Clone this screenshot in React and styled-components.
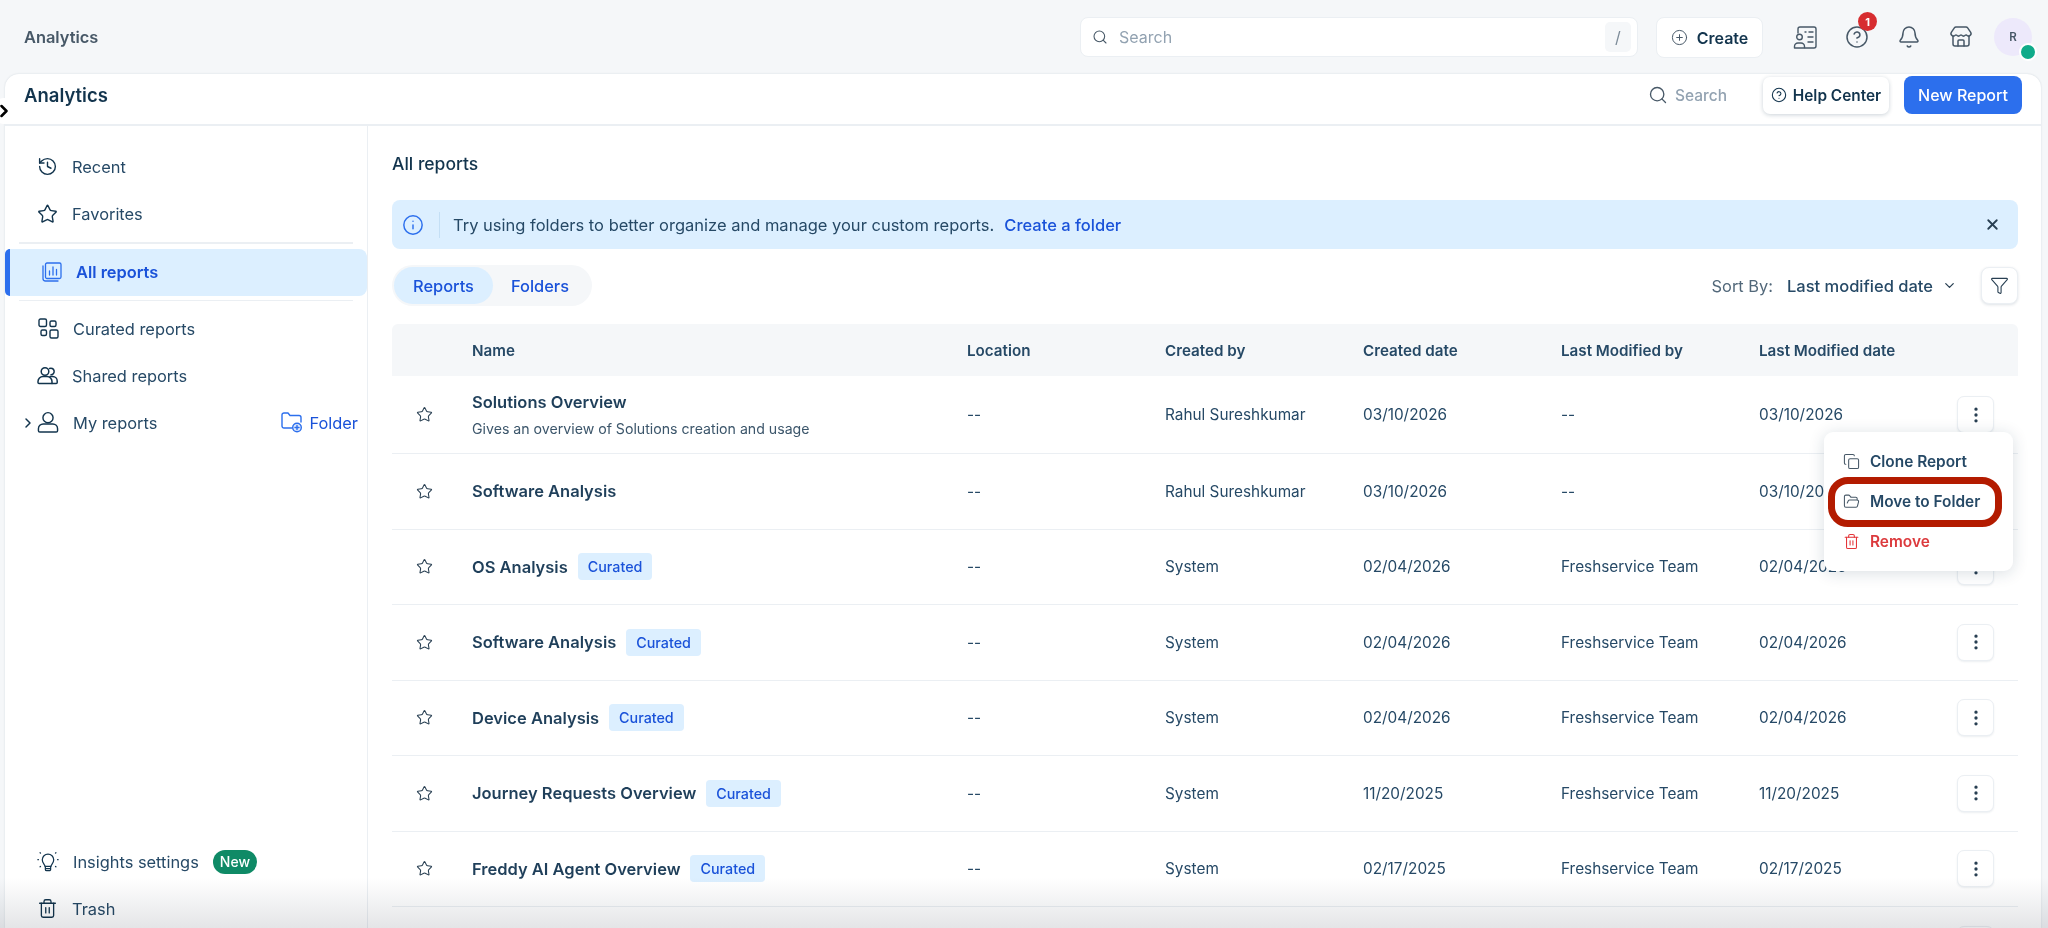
import styled, { createGlobalStyle } from "styled-components";
import {
  Bell,
  ChevronDown,
  ChevronRight,
  CircleHelp,
  CirclePlus,
  Copy,
  EllipsisVertical,
  FolderOpen,
  Funnel,
  History,
  Info,
  Search,
  Star,
  Store,
  Trash2,
  X,
} from "lucide-react";

const reports = [
  { name: "Solutions Overview", desc: "Gives an overview of Solutions creation and usage", createdBy: "Rahul Sureshkumar", created: "03/10/2026", modifiedBy: "--", modified: "03/10/2026" },
  { name: "Software Analysis", createdBy: "Rahul Sureshkumar", created: "03/10/2026", modifiedBy: "--", modified: "03/10/2026" },
  { name: "OS Analysis", curated: true, createdBy: "System", created: "02/04/2026", modifiedBy: "Freshservice Team", modified: "02/04/2026" },
  { name: "Software Analysis", curated: true, createdBy: "System", created: "02/04/2026", modifiedBy: "Freshservice Team", modified: "02/04/2026" },
  { name: "Device Analysis", curated: true, createdBy: "System", created: "02/04/2026", modifiedBy: "Freshservice Team", modified: "02/04/2026" },
  { name: "Journey Requests Overview", curated: true, createdBy: "System", created: "11/20/2025", modifiedBy: "Freshservice Team", modified: "11/20/2025" },
  { name: "Freddy AI Agent Overview", curated: true, createdBy: "System", created: "02/17/2025", modifiedBy: "Freshservice Team", modified: "02/17/2025" },
];

const AllReportsIcon = () => (
  <svg width="20" height="20" viewBox="0 0 20 20" fill="none" stroke="currentColor" strokeWidth="1.3" strokeLinecap="round" strokeLinejoin="round">
    <rect x="3.5" y="1" width="15.5" height="15.5" rx="1.5" />
    <path d="M1 4v12.5C1 18 2 19 3.5 19H16" />
    <path d="M7.5 13V9M11 13V5M14.5 13V7.5" />
  </svg>
);

const CuratedIcon = () => (
  <svg width="21" height="21" viewBox="0 0 21 21" fill="none" stroke="currentColor" strokeWidth="1.4" strokeLinejoin="round">
    <rect x="1" y="1" width="7.5" height="7.5" rx="1.5" />
    <rect x="12" y="3" width="6" height="5.5" rx="1.5" />
    <rect x="3" y="12" width="5.5" height="5.5" rx="1.5" />
    <rect x="12" y="12" width="8" height="8" rx="1.5" />
  </svg>
);

const SharedIcon = () => (
  <svg width="21" height="19" viewBox="0 0 21 19" fill="none" stroke="currentColor" strokeWidth="1.5" strokeLinecap="round" strokeLinejoin="round">
    <circle cx="8" cy="5.5" r="3.8" />
    <path d="M1 16v-.5A5 5 0 0 1 6 10.5h4a5 5 0 0 1 5 5v2H2a1 1 0 0 1-1-1z" />
    <path d="M12.5 2.5a3.3 3.3 0 1 1 1.5 6.3" />
    <path d="M15 17.5h4.2a1 1 0 0 0 1-1V15a4.5 4.5 0 0 0-4.5-4.5H13" />
  </svg>
);

const PersonIcon = () => (
  <svg width="23" height="23" viewBox="0 0 23 23" fill="none" stroke="currentColor" strokeWidth="1.5" strokeLinejoin="round">
    <circle cx="11.5" cy="6.5" r="5.3" />
    <path d="M1.5 20v-2a5 5 0 0 1 5-5h10a5 5 0 0 1 5 5v2a1.5 1.5 0 0 1-1.5 1.5H3A1.5 1.5 0 0 1 1.5 20z" />
  </svg>
);

const BulbIcon = () => (
  <svg width="25" height="25" viewBox="0 0 25 25" fill="none" stroke="currentColor" strokeWidth="1.4" strokeLinecap="round" strokeLinejoin="round">
    <path d="M9 18c0-2-3-3.500-3-7.500a6.500 6.500 0 0 1 13 0c0 4-3 5.500-3 7.500z" />
    <path d="M9.500 18v3.500a1.500 1.500 0 0 0 1.500 1.500h3a1.500 1.500 0 0 0 1.500-1.500V18M9.500 20.500h6" />
    <path d="M1 10.500h.6M23.400 10.500h.6M3.500 2.500l.5.5M21.500 2.500l-.5.5M3.500 18.500l.5-.5M21.500 18.500l-.5-.5" />
  </svg>
);

const NewFolderIcon = () => (
  <svg width="22" height="21" viewBox="0 0 22 21" fill="none" stroke="currentColor" strokeWidth="1.4" strokeLinecap="round" strokeLinejoin="round">
    <path d="M11 16H3a2 2 0 0 1-2-2V3a2 2 0 0 1 2-2h4l2 2.500h9a2 2 0 0 1 2 2V10" />
    <circle cx="16" cy="15.500" r="4.300" fill="currentColor" fillOpacity="0.15" />
    <path d="M16 13.500v4M14 15.500h4" />
  </svg>
);

const ContactsIcon = () => (
  <svg width="25" height="25" viewBox="0 0 25 25" fill="none" stroke="currentColor" strokeWidth="1.4" strokeLinecap="round" strokeLinejoin="round">
    <path d="M5 8V4a2 2 0 0 1 2-2h14a2 2 0 0 1 2 2v17a2 2 0 0 1-2 2H12" />
    <circle cx="6.500" cy="12" r="2.800" />
    <path d="M1.500 23v-1.500a3.500 3.500 0 0 1 3.500-3.500h3a3.500 3.500 0 0 1 3.500 3.500V23z" />
    <path d="M12 7h1M16 7h4M15 12h5M15 17h5" />
  </svg>
);

const GlobalStyle = createGlobalStyle`
  html, body {
    margin: 0;
    height: 100%;
    overflow: hidden;
    background: #f5f7f9;
  }
  body {
    font-family: Inter, "Liberation Sans", sans-serif;
    color: #12344d;
  }
  *, *::after {
    box-sizing: border-box;
  }
`;

const Page = styled.div`
  position: relative;
  height: 928px;
  display: flex;
  flex-direction: column;
  overflow: hidden;
`;

const TopBar = styled.header`
  height: 74px;
  flex-shrink: 0;
  display: flex;
  align-items: flex-start;
  padding: 17px 16px 0 24px;
`;

const TopTitle = styled.div`
  font-size: 16.4px;
  font-weight: 600;
  color: #475867;
  line-height: 40px;
  margin-right: auto;
`;

const GlobalSearch = styled.div`
  width: 558px;
  height: 40px;
  background: #fff;
  border: 1px solid #ebeff3;
  border-radius: 8px;
  display: flex;
  align-items: center;
  gap: 11px;
  padding: 0 6px 0 11px;
  color: #92a2b1;
  font-size: 16px;
  svg {
    color: #475867;
  }
`;

const SlashKey = styled.span`
  margin-left: auto;
  width: 26px;
  height: 30px;
  border-radius: 5px;
  background: #f5f7f9;
  display: flex;
  align-items: center;
  justify-content: center;
  color: #7c8b98;
  font-size: 16px;
`;

const CreateButton = styled.button`
  margin-left: 18px;
  width: 107px;
  height: 41px;
  background: #fff;
  border: 1px solid #ebeff3;
  border-radius: 8px;
  display: flex;
  align-items: center;
  justify-content: center;
  gap: 9px;
  font: 600 16px Inter, sans-serif;
  color: #12344d;
  svg {
    color: #475867;
  }
`;

const TopIcons = styled.div`
  display: flex;
  align-items: center;
  gap: 26px;
  margin-left: 29px;
  height: 38px;
  margin-top: 1px;
  color: #475867;
`;

const IconSlot = styled.span`
  position: relative;
  display: flex;
  width: 26px;
  justify-content: center;
`;

const CountBadge = styled.span`
  position: absolute;
  top: -13px;
  right: -7px;
  width: 19px;
  height: 19px;
  border-radius: 50%;
  background: #d72d30;
  color: #fff;
  font-size: 11px;
  font-weight: 700;
  display: flex;
  align-items: center;
  justify-content: center;
`;

const Avatar = styled.div`
  position: relative;
  width: 38px;
  height: 38px;
  border-radius: 50%;
  background: #ede9fb;
  color: #475867;
  font-size: 11.5px;
  font-weight: 600;
  display: flex;
  align-items: center;
  justify-content: center;
  margin-left: -6px;
`;

const StatusDot = styled.span`
  position: absolute;
  right: -5px;
  bottom: -5px;
  width: 18px;
  height: 18px;
  border-radius: 50%;
  background: #10ab8a;
  border: 2.5px solid #fff;
`;

const Card = styled.div`
  flex: 1;
  min-height: 0;
  margin: 0 7px 0 5px;
  background: #fff;
  border-top-left-radius: 14px;
  border-top-right-radius: 14px;
  box-shadow: 0 0 2px rgba(18, 52, 77, 0.16);
  display: flex;
  flex-direction: column;
`;

const CardHeader = styled.div`
  height: 52px;
  flex-shrink: 0;
  display: flex;
  align-items: center;
  padding: 2px 19px 10px;
  border-bottom: 2px solid #ebeff3;
`;

const CardTitle = styled.h1`
  margin: 0 auto 0 0;
  font-size: 18.5px;
  font-weight: 600;
  color: #12344d;
`;

const HeaderSearch = styled.div`
  display: flex;
  align-items: center;
  gap: 7px;
  color: #92a2b1;
  font-size: 15.5px;
  font-weight: 500;
  margin-right: 36px;
  svg {
    color: #475867;
  }
`;

const HelpButton = styled.button`
  width: 126px;
  height: 37px;
  background: #fff;
  border: none;
  border-radius: 7px;
  box-shadow: 0 1px 4px rgba(18, 52, 77, 0.22);
  display: flex;
  align-items: center;
  justify-content: center;
  gap: 6px;
  font: 600 15.4px Inter, sans-serif;
  color: #12344d;
`;

const PrimaryButton = styled.button`
  margin-left: 15px;
  width: 118px;
  height: 38px;
  border: none;
  border-radius: 8px;
  background: #2c6fed;
  color: #fff;
  font: 500 16px Inter, sans-serif;
`;

const Collapse = styled.div`
  position: absolute;
  left: -8px;
  top: 98px;
  width: 24px;
  height: 26px;
  border-radius: 50%;
  background: #fff;
  display: flex;
  align-items: center;
  padding-left: 2px;
  color: #000;
`;

const CardBody = styled.div`
  flex: 1;
  min-height: 0;
  display: grid;
  grid-template-columns: 363px 1fr;
`;

const Sidebar = styled.aside`
  border-right: 1.5px solid #ebeff3;
  display: flex;
  flex-direction: column;
  justify-content: space-between;
  padding-top: 17px;
`;

const NavGroup = styled.nav`
  display: flex;
  flex-direction: column;
  margin-bottom: ${(p) => p.$bottom || "0"};
`;

const NavItem = styled.div`
  position: relative;
  height: 47px;
  display: flex;
  align-items: center;
  gap: 14px;
  padding-left: 32px;
  font-size: 16.4px;
  color: #264966;
`;

const NavIcon = styled.span`
  width: ${(p) => p.$width || "21px"};
  display: flex;
  justify-content: center;
  flex-shrink: 0;
  color: #12344d;
`;

const ActiveNavItem = styled(NavItem)`
  background: #dcefff;
  border-left: 5px solid #2c6fed;
  border-radius: 5px 8px 8px 5px;
  font-weight: 600;
  color: #1a52d9;
  svg {
    color: #2c6fed;
  }
`;

const NavDivider = styled.div`
  height: 1.5px;
  margin: ${(p) => p.$margin};
  margin-left: 14px;
  margin-right: 14px;
  background: #ebeff3;
`;

const Expand = styled.span`
  position: absolute;
  left: 15px;
  display: flex;
  color: #12344d;
`;

const FolderLink = styled.span`
  margin-left: auto;
  margin-right: 9px;
  display: flex;
  align-items: center;
  gap: 6px;
  color: #1a52d9;
  svg {
    color: #2c6fed;
  }
`;

const NewTag = styled.span`
  background: #0f8a66;
  color: #fff;
  font-size: 14px;
  font-weight: 500;
  border-radius: 12px;
  height: 24px;
  padding: 0 7px;
  display: flex;
  align-items: center;
`;

const Main = styled.main`
  position: relative;
  padding: 0 23px 0 24px;
  overflow: hidden;
`;

const PageTitle = styled.h2`
  margin: 0;
  padding-top: 25px;
  line-height: 26px;
  font-size: 17.5px;
  font-weight: 500;
  color: #12344d;
`;

const InfoBanner = styled.div`
  margin-top: 23px;
  height: 49px;
  background: #dcefff;
  border-radius: 8px;
  display: flex;
  align-items: center;
  padding: 0 17px 0 10px;
  font-size: 16.5px;
  color: #264966;
`;

const BannerIcon = styled.span`
  display: flex;
  color: #2c6fed;
  padding-right: 15px;
  margin-right: 13px;
  border-right: 1px solid #c4dff5;
  height: 26px;
  align-items: center;
`;

const BannerLink = styled.a`
  color: #1a52d9;
  font-weight: 500;
  margin-left: 10px;
`;

const BannerClose = styled.span`
  margin-left: auto;
  display: flex;
  color: #283f52;
`;

const ToolRow = styled.div`
  margin-top: 16px;
  height: 41px;
  display: flex;
  align-items: center;
`;

const Tabs = styled.div`
  height: 41px;
  padding: 2px;
  display: flex;
  background: #f5f7f9;
  border-radius: 21px;
`;

const Tab = styled.span`
  height: 37px;
  padding: ${(p) => (p.$active ? "0 19px" : "0 21px 0 18px")};
  display: flex;
  align-items: center;
  font-size: 16.4px;
  font-weight: 500;
  color: #1a52d9;
  border-radius: 19px;
  background: ${(p) => (p.$active ? "#dcefff" : "transparent")};
`;

const SortLabel = styled.span`
  margin-left: auto;
  font-size: 16.4px;
  color: #52687a;
`;

const SortValue = styled.span`
  margin-left: 14px;
  font-size: 16.5px;
  font-weight: 500;
  color: #264966;
`;

const SortCaret = styled.span`
  display: flex;
  margin-left: 9px;
  color: #283f52;
`;

const FilterButton = styled.button`
  margin-left: 24px;
  width: 37px;
  height: 37px;
  padding: 0;
  background: #fff;
  border: 1px solid #ebeff3;
  border-radius: 8px;
  box-shadow: 0 1px 3px rgba(18, 52, 77, 0.14);
  display: flex;
  align-items: center;
  justify-content: center;
  color: #283f52;
`;

const columns = "80px 495px 198px 198px 198px 198px 1fr";

const TableHead = styled.div`
  margin-top: 18px;
  height: 52px;
  display: grid;
  grid-template-columns: ${columns};
  align-items: center;
  background: #f5f7f9;
  border-radius: 6px 6px 0 0;
  font-size: 15.2px;
  font-weight: 600;
  color: #264966;
`;

const Row = styled.div`
  height: ${(p) => (p.$tall ? "78px" : "75.5px")};
  display: grid;
  grid-template-columns: ${columns};
  align-items: center;
  border-bottom: 1.5px solid #ebeff3;
  font-size: 15.35px;
  color: #264966;
`;

const StarCell = styled.span`
  display: flex;
  padding-left: 24px;
  color: #283f52;
`;

const NameLine = styled.div`
  display: flex;
  align-items: center;
  gap: 10px;
  font-weight: 600;
  font-size: 16.5px;
  color: #1f3f5a;
`;

const Description = styled.div`
  margin-top: 8px;
  font-size: 14.15px;
  color: #3c566b;
`;

const CuratedTag = styled.span`
  height: 27px;
  padding: 0 10px;
  display: flex;
  align-items: center;
  background: #dcefff;
  border-radius: 4px;
  font-size: 14.3px;
  font-weight: 500;
  color: #1a52d9;
`;

const LastCell = styled.div`
  display: flex;
  align-items: center;
  padding-right: 24px;
`;

const KebabButton = styled.button`
  margin-left: auto;
  width: 37px;
  height: 37px;
  padding: 0;
  background: #fff;
  border: 1px solid #ebeff3;
  border-radius: 7px;
  box-shadow: 0 1px 2px rgba(18, 52, 77, 0.08);
  display: flex;
  align-items: center;
  justify-content: center;
  color: #283f52;
`;

const RowMenu = styled.div`
  position: absolute;
  left: 1456px;
  top: 306px;
  width: 189px;
  height: 139px;
  padding: 9px 0;
  background: #fff;
  border-radius: 9px;
  box-shadow: 0 2px 16px rgba(18, 52, 77, 0.16);
  z-index: 2;
`;

const MenuItem = styled.div`
  position: relative;
  height: 40px;
  display: flex;
  align-items: center;
  gap: 10px;
  padding-left: 19px;
  font-size: 15.4px;
  font-weight: 600;
  color: ${(p) => (p.$danger ? "#dc3a3d" : "#264966")};
  svg {
    color: ${(p) => (p.$danger ? "#e43538" : "#475867")};
  }
  ${(p) =>
    p.$marked &&
    `
    &::after {
      content: "";
      position: absolute;
      left: 4px;
      top: -4px;
      width: 174px;
      height: 50px;
      border: 7px solid #b31b00;
      border-radius: 20px;
    }
  `}
`;

const BottomFade = styled.div`
  position: absolute;
  left: 0;
  right: 0;
  bottom: 0;
  height: 50px;
  background: linear-gradient(#ffffff, #e4e5e7);
  mix-blend-mode: multiply;
  pointer-events: none;
  z-index: 3;
`;

const App = () => {
  return (
    <Page>
      <GlobalStyle />
      <TopBar>
        <TopTitle>Analytics</TopTitle>
        <GlobalSearch>
          <Search size={16} strokeWidth={1.6} />
          Search
          <SlashKey>/</SlashKey>
        </GlobalSearch>
        <CreateButton>
          <CirclePlus size={17} strokeWidth={1.4} />
          Create
        </CreateButton>
        <TopIcons>
          <IconSlot>
            <ContactsIcon />
          </IconSlot>
          <IconSlot>
            <CircleHelp size={24} strokeWidth={1.5} />
            <CountBadge>1</CountBadge>
          </IconSlot>
          <IconSlot>
            <Bell size={24} strokeWidth={1.5} />
          </IconSlot>
          <IconSlot>
            <Store size={24} strokeWidth={1.5} />
          </IconSlot>
          <Avatar>
            R
            <StatusDot />
          </Avatar>
        </TopIcons>
      </TopBar>

      <Card>
        <CardHeader>
          <CardTitle>Analytics</CardTitle>
          <HeaderSearch>
            <Search size={20} strokeWidth={1.6} />
            Search
          </HeaderSearch>
          <HelpButton>
            <CircleHelp size={16} strokeWidth={1.6} />
            Help Center
          </HelpButton>
          <PrimaryButton>New Report</PrimaryButton>
        </CardHeader>
        <CardBody>
          <Sidebar>
            <NavGroup>
              <NavItem>
                <NavIcon>
                  <History size={21} strokeWidth={1.6} />
                </NavIcon>
                Recent
              </NavItem>
              <NavItem>
                <NavIcon>
                  <Star size={22} strokeWidth={1.6} />
                </NavIcon>
                Favorites
              </NavItem>
              <NavDivider $margin="5px 0 5px" />
              <ActiveNavItem>
                <NavIcon $width="20px">
                  <AllReportsIcon />
                </NavIcon>
                All reports
              </ActiveNavItem>
              <NavDivider $margin="4px 0 4px" />
              <NavItem>
                <NavIcon $width="22px">
                  <CuratedIcon />
                </NavIcon>
                Curated reports
              </NavItem>
              <NavItem>
                <NavIcon>
                  <SharedIcon />
                </NavIcon>
                Shared reports
              </NavItem>
              <NavItem>
                <Expand>
                  <ChevronRight size={16} strokeWidth={2.2} />
                </Expand>
                <NavIcon $width="22px">
                  <PersonIcon />
                </NavIcon>
                My reports
                <FolderLink>
                  <NewFolderIcon />
                  Folder
                </FolderLink>
              </NavItem>
            </NavGroup>
            <NavGroup $bottom="-4px">
              <NavItem>
                <NavIcon $width="22px">
                  <BulbIcon />
                </NavIcon>
                Insights settings
                <NewTag>New</NewTag>
              </NavItem>
              <NavItem>
                <NavIcon>
                  <Trash2 size={23} strokeWidth={1.5} />
                </NavIcon>
                Trash
              </NavItem>
            </NavGroup>
          </Sidebar>

          <Main>
            <PageTitle>All reports</PageTitle>
            <InfoBanner>
              <BannerIcon>
                <Info size={22} strokeWidth={1.6} />
              </BannerIcon>
              Try using folders to better organize and manage your custom reports.
              <BannerLink>Create a folder</BannerLink>
              <BannerClose>
                <X size={17} strokeWidth={2.6} />
              </BannerClose>
            </InfoBanner>
            <ToolRow>
              <Tabs>
                <Tab $active>Reports</Tab>
                <Tab>Folders</Tab>
              </Tabs>
              <SortLabel>Sort By:</SortLabel>
              <SortValue>Last modified date</SortValue>
              <SortCaret>
                <ChevronDown size={15} strokeWidth={2} />
              </SortCaret>
              <FilterButton>
                <Funnel size={19} strokeWidth={1.4} />
              </FilterButton>
            </ToolRow>
            <TableHead>
              <span />
              <span>Name</span>
              <span>Location</span>
              <span>Created by</span>
              <span>Created date</span>
              <span>Last Modified by</span>
              <span>Last Modified date</span>
            </TableHead>
            {reports.map((report, i) => (
              <Row key={i} $tall={i === 0}>
                <StarCell>
                  <Star size={17} strokeWidth={1.5} />
                </StarCell>
                <div>
                  <NameLine>
                    {report.name}
                    {report.curated && <CuratedTag>Curated</CuratedTag>}
                  </NameLine>
                  {report.desc && <Description>{report.desc}</Description>}
                </div>
                <span>--</span>
                <span>{report.createdBy}</span>
                <span>{report.created}</span>
                <span>{report.modifiedBy}</span>
                <LastCell>
                  {report.modified}
                  <KebabButton>
                    <EllipsisVertical size={20} strokeWidth={2} />
                  </KebabButton>
                </LastCell>
              </Row>
            ))}
            <Row>
              <span />
              <span />
              <span />
              <span />
              <span />
              <span />
              <LastCell>
                <KebabButton>
                  <EllipsisVertical size={20} strokeWidth={2} />
                </KebabButton>
              </LastCell>
            </Row>
            <RowMenu>
              <MenuItem>
                <Copy size={17} strokeWidth={1.5} />
                Clone Report
              </MenuItem>
              <MenuItem $marked>
                <FolderOpen size={17} strokeWidth={1.5} />
                Move to Folder
              </MenuItem>
              <MenuItem $danger>
                <Trash2 size={17} strokeWidth={1.5} />
                Remove
              </MenuItem>
            </RowMenu>
          </Main>
        </CardBody>
      </Card>
      <Collapse>
        <ChevronRight size={20} strokeWidth={3} />
      </Collapse>
      <BottomFade />
    </Page>
  );
};

export default App;
